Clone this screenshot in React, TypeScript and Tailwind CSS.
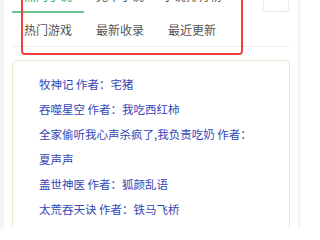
import React from 'react';

const TOP_TABS = ['热门小说', '完本小说', '小说排行榜'];
const SUB_TABS = ['热门游戏', '最新收录', '最近更新'];

const BOOKS = [
  { title: '牧神记', author: '宅猪' },
  { title: '吞噬星空', author: '我吃西红柿' },
  { title: '全家偷听我心声杀疯了,我负责吃奶', author: '夏声声' },
  { title: '盖世神医', author: '狐颜乱语' },
  { title: '太荒吞天诀', author: '铁马飞桥' },
  { title: '万古神帝', author: '飞天鱼' },
];

export default function App() {
  return (
    <div
      className="flex h-[228px] w-[300px] overflow-hidden bg-[#f4f4f4] pl-1 pr-[2px]"
      style={{ fontFamily: '"Noto Sans CJK SC", "Noto Sans", sans-serif' }}
    >
      <div className="relative flex-1 bg-white">
        {/* Tabs */}
        <div className="px-2">
          <div className="flex h-[13px]">
            {TOP_TABS.map((t, i) => (
              <div
                key={t}
                className={
                  'flex h-[13px] w-[72px] flex-col justify-end overflow-hidden text-center text-[12px] ' +
                  (i === 0
                    ? 'border-b-2 border-[#6cc28a] text-[#2fa86a]'
                    : 'border-b-2 border-transparent text-[#555]')
                }
              >
                <span className="mb-[7px] leading-[16px]">{t}</span>
              </div>
            ))}
            <div className="ml-auto mr-[1px] h-[12px] w-[26px] rounded-b-[3px] border border-t-0 border-[#ececec]" />
          </div>
          <div className="flex h-[34px] items-center border-b border-[#efefef]">
            {SUB_TABS.map((t) => (
              <div key={t} className="w-[72px] pt-[1px] text-center text-[12px] leading-[16px] text-[#555]">
                {t}
              </div>
            ))}
          </div>
        </div>

        {/* annotation */}
        <div className="absolute left-[17px] top-[-4px] h-[59px] w-[222px] rounded-[4px] border-2 border-[#f03c3c]" />

        {/* Book list */}
        <div className="mx-2 mt-[13px] rounded-[4px] border border-[#e2efd6] pl-[26px] pr-[26px] pt-[11px]">
          <ul>
            {BOOKS.map((b) => (
              <li key={b.title} className="text-[11.5px] leading-[25px] text-[#3646b8]">
                {b.title} 作者：{b.author}
              </li>
            ))}
          </ul>
        </div>
      </div>
    </div>
  );
}
